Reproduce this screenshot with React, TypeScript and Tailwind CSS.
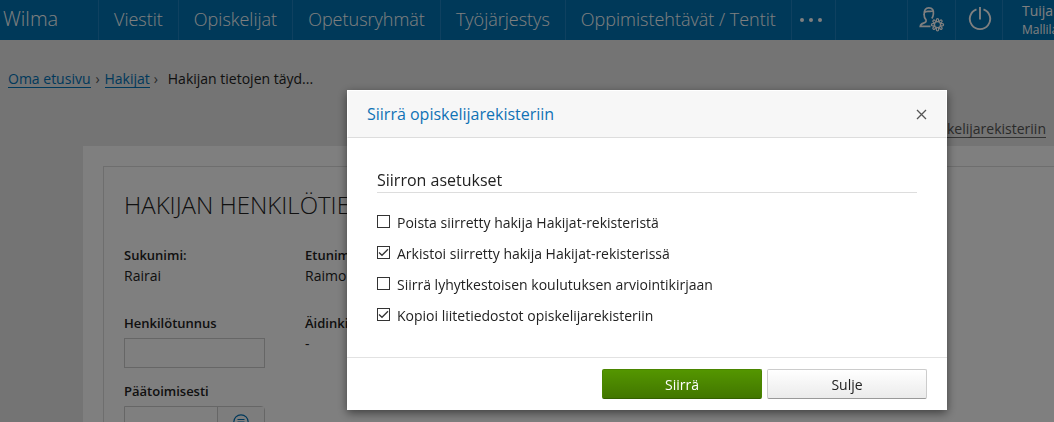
import React from 'react';

const navItems = ['Viestit', 'Opiskelijat', 'Opetusryhmät', 'Työjärjestys', 'Oppimistehtävät / Tentit'];

const options = [
  { id: 'poista', label: 'Poista siirretty hakija Hakijat-rekisteristä', checked: false },
  { id: 'arkistoi', label: 'Arkistoi siirretty hakija Hakijat-rekisterissä', checked: true },
  { id: 'lyhyt', label: 'Siirrä lyhytkestoisen koulutuksen arviointikirjaan', checked: false },
  { id: 'kopioi', label: 'Kopioi liitetiedostot opiskelijarekisteriin', checked: true },
];

const gearAngles = [0, 45, 90, 135, 180, 225, 270, 315];

function UserSettingsIcon() {
  return (
    <svg width="26" height="26" viewBox="0 0 26 26" fill="none" stroke="currentColor" strokeWidth="1.7" aria-hidden="true">
      <path d="M11.500 20.300H1.300c.2-1.900 1.500-2.700 3.300-3.200 2-.6 2.900-1.600 2.400-3.200-1.300-1.500-2-3.100-1.900-5.500C5 4.200 6.800 1.800 9.800 1.800c3.600 0 5.100 2.600 4.600 6.200-.2 2-.7 3.300-1.600 4.600" />
      <path d="M5.300 6.600C7.200 4 10.500 6.300 14 5" />
      <circle cx="18.500" cy="18.700" r="3" strokeWidth="1.200" />
      {gearAngles.map((angle) => (
        <path
          key={angle}
          d="M17.400 15.900v-2.200a1.100 1.100 0 0 1 2.200 0v2.200"
          strokeWidth="1.200"
          transform={`rotate(${angle} 18.500 18.700)`}
        />
      ))}
    </svg>
  );
}

function PowerIcon() {
  return (
    <svg width="24" height="25" viewBox="0 0 24 25" fill="none" stroke="currentColor" strokeWidth="1.900" aria-hidden="true">
      <path d="M8.500 3.300a10.200 10.200 0 1 0 7 0M12 1v12.500" />
    </svg>
  );
}

function TopBar() {
  return (
    <header className="flex h-10 overflow-hidden bg-[#0072b2] text-lg leading-10 font-light whitespace-nowrap text-white">
      <a href="#etusivu" className="w-[99px] shrink-0 border-r border-[#1e83c1] pl-[3px] text-xl leading-[38px]">Wilma</a>
      <nav className="flex shrink-0">
        {navItems.map((item) => (
          <a key={item} href="#nav" className="border-r border-[#1e83c1] px-[15px] leading-[39px]">{item}</a>
        ))}
        <button type="button" aria-label="Lisää" className="flex w-11 items-center justify-center gap-[5px] border-r border-[#1e83c1] pr-[4px]">
          <span className="size-1 rounded-full bg-white" />
          <span className="size-1 rounded-full bg-white" />
          <span className="size-1 rounded-full bg-white" />
        </button>
      </nav>
      <div className="ml-auto flex shrink-0">
        <button type="button" aria-label="Asetukset" className="flex w-12 justify-center border-l border-[#1e83c1] pt-[6px] pl-px"><UserSettingsIcon /></button>
        <button type="button" aria-label="Kirjaudu ulos" className="flex w-12 justify-center border-x border-[#1e83c1] pt-[6px] pl-[2px]"><PowerIcon /></button>
        <div className="w-[51px] pt-[2px] pl-[19px] font-normal">
          <p className="text-sm leading-[18px]">Tuija</p>
          <p className="text-xs leading-5">Mallila</p>
        </div>
      </div>
    </header>
  );
}

function ApplicantPage() {
  return (
    <main>
      <div className="flex items-center px-2 pt-[29px] text-sm leading-5">
        <a href="#etusivu" className="border-b border-[#0072b7] leading-[17px] text-[#0072b7]">Oma etusivu</a>
        <span className="w-[14px] text-center text-[#555]">›</span>
        <a href="#hakijat" className="border-b border-[#0072b7] leading-[17px] text-[#0072b7]">Hakijat</a>
        <span className="w-[18px] pl-1 text-[#555]">›</span>
        <span>Hakijan tietojen täyd...</span>
      </div>
      <div className="flex justify-end pt-[31px] pr-2 text-sm">
        <a href="#siirra" className="border-b border-[#666] leading-[17px] text-[#555]">Siirrä opiskelijarekisteriin</a>
      </div>
      <section className="mt-2 ml-[83px] bg-white pt-5 pl-5">
        <div className="min-h-80 border-t border-l border-[#ddd] pl-5">
          <h1 className="pt-[22px] text-2xl leading-8 font-light whitespace-nowrap">HAKIJAN HENKILÖTIEDOT</h1>
          <div className="grid grid-cols-[141px_1fr] gap-x-10 pt-[23px] text-sm leading-5">
            <div>
              <p className="text-[13px] leading-[22px] font-semibold">Sukunimi:</p>
              <p>Rairai</p>
            </div>
            <div>
              <p className="text-[13px] leading-[22px] font-semibold">Etunimet:</p>
              <p>Raimo</p>
            </div>
            <div className="pt-[26px]">
              <label htmlFor="henkilotunnus" className="block text-[13px] leading-[22px] font-semibold">Henkilötunnus</label>
              <input id="henkilotunnus" type="text" className="mt-1 block h-[30px] w-full border border-[#ccc] bg-white px-2" />
              <label htmlFor="paatoimisesti" className="mt-3 block text-[13px] leading-[22px] font-semibold">Päätoimisesti</label>
              <div className="mt-1 flex h-[30px] rounded-tr-sm border border-[#ccc]">
                <input id="paatoimisesti" type="text" className="min-w-0 flex-1 bg-white px-2" />
                <button type="button" aria-label="Valitse" className="flex w-[47px] items-start justify-center border-l border-[#ccc] bg-[#fafafa] pt-[7px]">
                  <svg width="16" height="16" viewBox="0 0 16 16" fill="none" stroke="#0072b7" strokeWidth="1.200" aria-hidden="true">
                    <circle cx="8" cy="8" r="7.200" />
                    <path d="M4.500 5.500h7M4.500 8h7M4.500 10.500h7" />
                  </svg>
                </button>
              </div>
            </div>
            <div className="pt-[26px]">
              <p className="text-[13px] leading-[22px] font-semibold">Äidinkieli</p>
              <p>-</p>
            </div>
          </div>
        </div>
      </section>
    </main>
  );
}

function TransferDialog() {
  return (
    <div role="dialog" aria-modal="true" aria-labelledby="dialog-title" className="w-[600px] max-w-full bg-white shadow-[0_3px_9px_rgba(0,0,0,0.5)]">
      <div className="flex h-12 items-center justify-between border border-white border-b-[#ddd] bg-[#f7f7f7] pr-[19px] pl-[19px]">
        <h2 id="dialog-title" className="text-base leading-6 text-[#0f72b5]">Siirrä opiskelijarekisteriin</h2>
        <button type="button" aria-label="Sulje ikkuna" className="pt-px">
          <svg width="11" height="11" viewBox="0 0 11 11" fill="none" stroke="#555" strokeWidth="1.300" aria-hidden="true">
            <path d="M1 1l9 9M10 1l-9 9" />
          </svg>
        </button>
      </div>
      <div className="px-[30px] pt-[30px] pb-[31px]">
        <fieldset>
          <legend className="w-full border-b border-[#ddd] text-base leading-6">Siirron asetukset</legend>
          <div className="flex flex-col gap-[11px] pt-5">
            {options.map((option) => (
              <label key={option.id} htmlFor={option.id} className="flex items-start gap-[7px] text-sm leading-5">
                <span className="relative mt-[2px] size-[13px] shrink-0">
                  <input id={option.id} type="checkbox" defaultChecked={option.checked} className="peer block size-[13px] appearance-none border border-[#333] bg-white" />
                  <svg width="13" height="13" viewBox="0 0 13 13" fill="none" stroke="#333" strokeWidth="1.300" aria-hidden="true" className="pointer-events-none absolute inset-0 hidden peer-checked:block">
                    <path d="M2 6.500l3 2.800 6-6" />
                  </svg>
                </span>
                {option.label}
              </label>
            ))}
          </div>
        </fieldset>
      </div>
      <div className="flex justify-end gap-[5px] border-t border-[#e2e2e2] px-5 py-[11px] text-sm">
        <button type="button" className="h-[30px] w-40 rounded-xs border border-[#4a8500] border-b-[#346000] bg-linear-to-b from-[#549600] to-[#427600] pt-[2px] text-white">Siirrä</button>
        <button type="button" className="h-[30px] w-40 rounded-xs border border-[#ccc] border-b-[#999] bg-linear-to-b from-white to-[#ebebeb] pt-[2px]">Sulje</button>
      </div>
    </div>
  );
}

export default function App() {
  return (
    <div className="h-screen overflow-hidden bg-[#e8e8e8] font-['Open_Sans',sans-serif] text-[#222]">
      <TopBar />
      <ApplicantPage />
      <div className="fixed inset-0 flex items-start justify-end bg-black/50 pt-[90px] pr-[107px]">
        <TransferDialog />
      </div>
    </div>
  );
}
